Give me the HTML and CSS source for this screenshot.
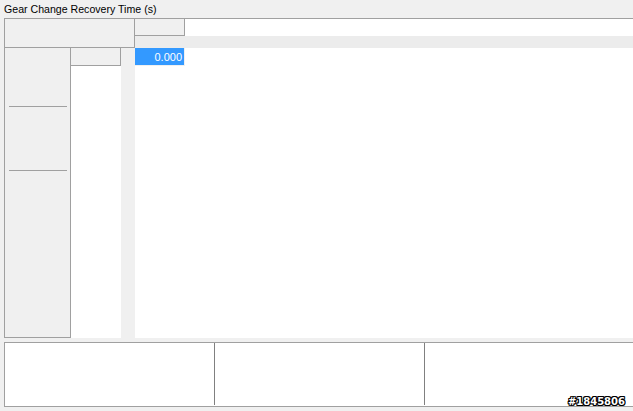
FILE: index.html
```html
<!DOCTYPE html>
<html>
<head>
<meta charset="utf-8">
<link rel="stylesheet" href="styles.css">
</head>
<body>
<div class="title">Gear Change Recovery Time (s)</div>
<div class="grid">
  <div class="corner"></div>
  <div class="colhead"></div>
  <div class="topwhite"></div>
  <div class="band"></div>
  <div class="leftblock">
    <div class="sep sep1"></div>
    <div class="sep sep2"></div>
  </div>
  <div class="rowhead"></div>
  <div class="rowwhite"></div>
  <div class="strip"></div>
  <div class="value">0.000</div>
  <div class="data"></div>
  <div class="dataright"></div>
</div>
<div class="panel">
  <div class="pcell"></div>
  <div class="pcell"></div>
  <div class="pcell last"></div>
</div>
<div class="watermark">#1845806</div>
</body>
</html>
```

FILE: styles.css
```css
html, body {
  margin: 0;
  padding: 0;
}
body {
  width: 633px;
  height: 411px;
  background: #f0f0f0;
  font-family: "Liberation Sans", Arial, sans-serif;
  font-size: 11px;
  color: #000;
  position: relative;
  overflow: hidden;
}
.title {
  height: 18px;
  line-height: 19px;
  padding-left: 4px;
  font-size: 10.6px;
}
.grid {
  margin-left: 4px;
  height: 320px;
  box-sizing: border-box;
  border-top: 1px solid #a0a0a0;
  border-left: 1px solid #a0a0a0;
  display: grid;
  grid-template-columns: 66px 50px 14px 50px 1fr;
  grid-template-rows: 17px 12px 18px 1fr;
}
.corner {
  grid-column: 1 / 4;
  grid-row: 1 / 3;
  background: #f0f0f0;
  border-right: 1px solid #a0a0a0;
  border-bottom: 1px solid #a0a0a0;
}
.colhead {
  grid-column: 4;
  grid-row: 1;
  background: #f0f0f0;
  border-right: 1px solid #a0a0a0;
  border-bottom: 1px solid #a0a0a0;
}
.topwhite {
  grid-column: 5;
  grid-row: 1;
  background: #fff;
}
.band {
  grid-column: 4 / 6;
  grid-row: 2;
  background: #ececec;
}
.leftblock {
  grid-column: 1;
  grid-row: 3 / 5;
  background: #f0f0f0;
  border-right: 1px solid #a0a0a0;
  border-bottom: 1px solid #a0a0a0;
  position: relative;
}
.sep {
  position: absolute;
  left: 4px;
  width: 58px;
  height: 1px;
  background: #a0a0a0;
}
.sep1 { top: 58px; }
.sep2 { top: 122px; }
.rowhead {
  grid-column: 2;
  grid-row: 3;
  background: #f0f0f0;
  border-right: 1px solid #a0a0a0;
  border-bottom: 1px solid #a0a0a0;
}
.rowwhite {
  grid-column: 2;
  grid-row: 4;
  background: #fff;
}
.strip {
  grid-column: 3;
  grid-row: 3 / 5;
  background: #f0f0f0;
}
.value {
  grid-column: 4;
  grid-row: 3;
  background: #3399ff;
  color: #fff;
  text-align: right;
  padding: 1px 2px 0 0;
  margin-right: 1px;
  margin-bottom: 1px;
  line-height: 16px;
  font-size: 11px;
}
.data {
  grid-column: 4;
  grid-row: 4;
  background: #fff;
}
.dataright {
  grid-column: 5;
  grid-row: 3 / 5;
  background: #fff;
}
.panel {
  margin: 4px 0 0 4px;
  height: 65px;
  box-sizing: border-box;
  border-top: 1px solid #a0a0a0;
  border-left: 1px solid #a0a0a0;
  border-bottom: 1px solid #a0a0a0;
  background: #fff;
  display: grid;
  grid-template-columns: 210px 210px 1fr;
}
.pcell {
  border-right: 1px solid #808080;
  margin-bottom: 1px;
}
.pcell.last {
  border-right: none;
}
.watermark {
  position: absolute;
  right: 8px;
  bottom: 3px;
  font-family: "DejaVu Sans", sans-serif;
  font-weight: bold;
  font-size: 10px;
  line-height: 12px;
  color: #fff;
  text-shadow: 1px 0 0 #000, -1px 0 0 #000, 0 1px 0 #000, 0 -1px 0 #000, 1px 1px 0 #000, -1px -1px 0 #000, 1px -1px 0 #000, -1px 1px 0 #000;
}
```
